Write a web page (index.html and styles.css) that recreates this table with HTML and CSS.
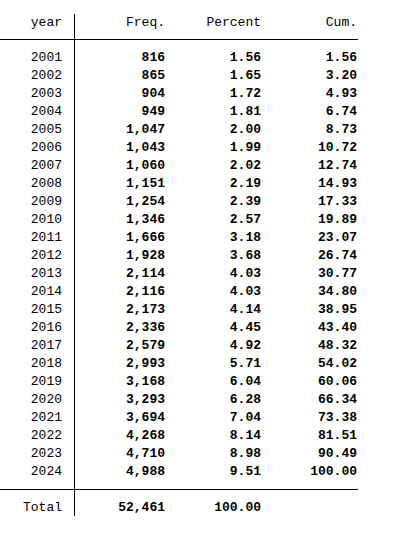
FILE: index.html
```html
<!DOCTYPE html>
<html lang="en">
<head>
    <meta charset="UTF-8">
    <meta name="viewport" content="width=device-width, initial-scale=1.0">
    <title>tabulate year</title>
    <link rel="stylesheet" href="styles.css">
</head>
<body>
    <div class="tab">
        <div class="sect head">
            <div class="col lbl"><div>year</div></div>
            <div class="col c-freq"><div>Freq.</div></div>
            <div class="col c-pct"><div>Percent</div></div>
            <div class="col c-cum"><div>Cum.</div></div>
        </div>

        <div class="sect body">
            <div class="col lbl">
                <div>2001</div><div>2002</div><div>2003</div><div>2004</div>
                <div>2005</div><div>2006</div><div>2007</div><div>2008</div>
                <div>2009</div><div>2010</div><div>2011</div><div>2012</div>
                <div>2013</div><div>2014</div><div>2015</div><div>2016</div>
                <div>2017</div><div>2018</div><div>2019</div><div>2020</div>
                <div>2021</div><div>2022</div><div>2023</div><div>2024</div>
            </div>
            <div class="col c-freq num">
                <div>816</div><div>865</div><div>904</div><div>949</div>
                <div>1,047</div><div>1,043</div><div>1,060</div><div>1,151</div>
                <div>1,254</div><div>1,346</div><div>1,666</div><div>1,928</div>
                <div>2,114</div><div>2,116</div><div>2,173</div><div>2,336</div>
                <div>2,579</div><div>2,993</div><div>3,168</div><div>3,293</div>
                <div>3,694</div><div>4,268</div><div>4,710</div><div>4,988</div>
            </div>
            <div class="col c-pct num">
                <div>1.56</div><div>1.65</div><div>1.72</div><div>1.81</div>
                <div>2.00</div><div>1.99</div><div>2.02</div><div>2.19</div>
                <div>2.39</div><div>2.57</div><div>3.18</div><div>3.68</div>
                <div>4.03</div><div>4.03</div><div>4.14</div><div>4.45</div>
                <div>4.92</div><div>5.71</div><div>6.04</div><div>6.28</div>
                <div>7.04</div><div>8.14</div><div>8.98</div><div>9.51</div>
            </div>
            <div class="col c-cum num">
                <div>1.56</div><div>3.20</div><div>4.93</div><div>6.74</div>
                <div>8.73</div><div>10.72</div><div>12.74</div><div>14.93</div>
                <div>17.33</div><div>19.89</div><div>23.07</div><div>26.74</div>
                <div>30.77</div><div>34.80</div><div>38.95</div><div>43.40</div>
                <div>48.32</div><div>54.02</div><div>60.06</div><div>66.34</div>
                <div>73.38</div><div>81.51</div><div>90.49</div><div>100.00</div>
            </div>
        </div>

        <div class="sect foot">
            <div class="col lbl"><div>Total</div></div>
            <div class="col c-freq num"><div>52,461</div></div>
            <div class="col c-pct num"><div>100.00</div></div>
            <div class="col c-cum num"><div>&nbsp;</div></div>
        </div>
    </div>
</body>
</html>
```

FILE: styles.css
```css
body {
    margin: 0;
    background: #fff;
    color: #000;
    font-family: "Courier New", "Liberation Mono", monospace;
    font-size: 13px;
}

.tab {
    width: 358px;
    margin-top: 14px;
}

/* each section is a row of columns, so the label column border runs through the padding */
.sect {
    display: flex;
}

.sect.head,
.sect.body {
    border-bottom: 1px solid #000;
}

.col {
    text-align: right;
    line-height: 18px;
}

.lbl {
    width: 62px;
    padding-right: 12px;
    border-right: 1px solid #000;
}

.c-freq { width: 90px; }
.c-pct  { width: 96px; }
.c-cum  { width: 96px; }

.num { font-weight: bold; }

.head .col {
    line-height: 16px;
    padding-top: 1px;
    padding-bottom: 8px;
}

.body .col {
    padding-top: 9px;
    padding-bottom: 8px;
}

.foot .col {
    padding-top: 9px;
    line-height: 17px;
}
```
